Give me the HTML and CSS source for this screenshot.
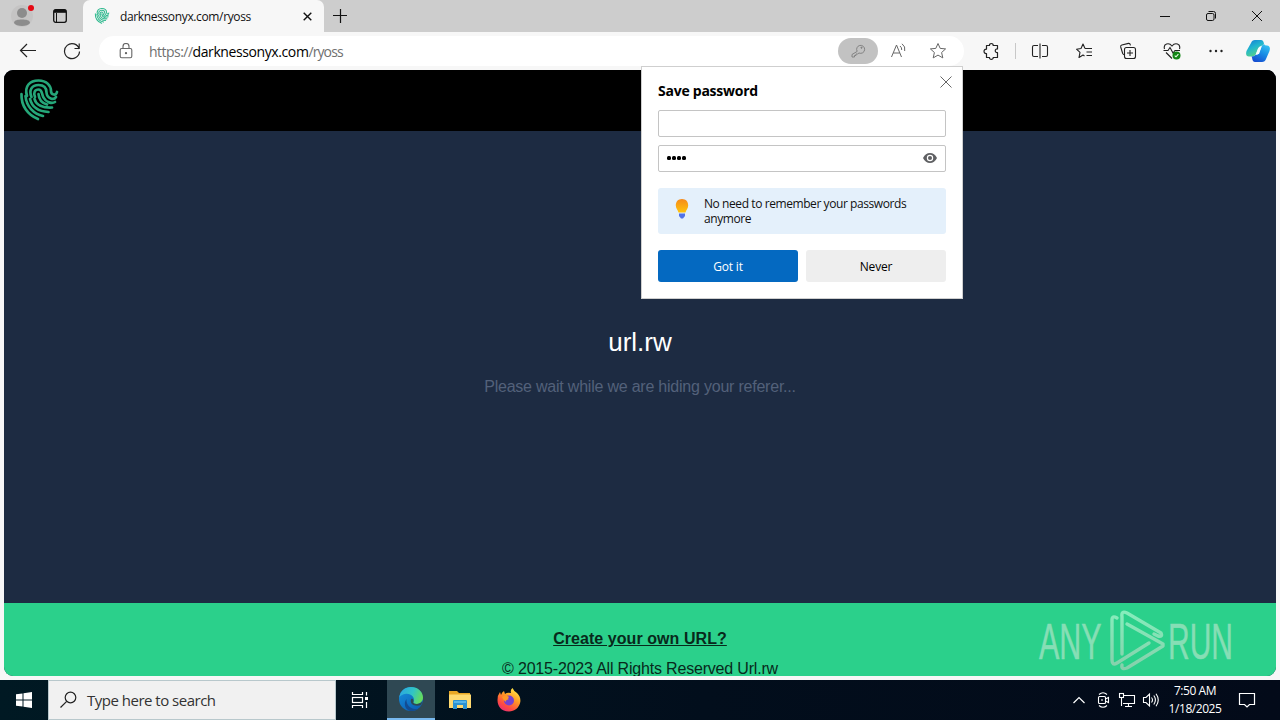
FILE: index.html
```html
<!DOCTYPE html>
<html lang="en">
<head>
<meta charset="utf-8">
<title>darknessonyx.com/ryoss</title>
<link rel="stylesheet" href="styles.css">
</head>
<body>
<svg class="defs" width="0" height="0">
  <defs>
    <linearGradient id="bulb" x1="0" y1="0" x2="0" y2="1"><stop offset="0" stop-color="#f58a1c"/><stop offset="1" stop-color="#ffc40c"/></linearGradient>
    <linearGradient id="cpA" x1="0" y1="0" x2="0.5" y2="1"><stop offset="0" stop-color="#1477d4"/><stop offset="0.5" stop-color="#20b5cf"/><stop offset="1" stop-color="#58d486"/></linearGradient>
    <linearGradient id="cpB" x1="0.8" y1="0" x2="0.3" y2="1"><stop offset="0" stop-color="#36c5f2"/><stop offset="0.5" stop-color="#198de5"/><stop offset="1" stop-color="#164ed1"/></linearGradient>
    <linearGradient id="edgeG" x1="0" y1="0.2" x2="1" y2="0.5"><stop offset="0" stop-color="#2aa5e2"/><stop offset="0.55" stop-color="#31c4c6"/><stop offset="1" stop-color="#66dc5a"/></linearGradient>
    <linearGradient id="edgeB" x1="0" y1="0" x2="0.7" y2="1"><stop offset="0" stop-color="#1792df"/><stop offset="1" stop-color="#0b5fb4"/></linearGradient>
    <linearGradient id="fox" x1="0.8" y1="0" x2="0.2" y2="1"><stop offset="0" stop-color="#fff14b"/><stop offset="0.4" stop-color="#ff9a25"/><stop offset="0.75" stop-color="#ff4a42"/><stop offset="1" stop-color="#e62b7b"/></linearGradient>
    <linearGradient id="mark" gradientUnits="userSpaceOnUse" x1="0" y1="0" x2="0" y2="62"><stop offset="0" stop-color="#86efbd"/><stop offset="1" stop-color="#86cfab"/></linearGradient>
    <symbol id="finger" viewBox="0 0 40 42">
      <g fill="none" stroke-width="2.700" stroke-linecap="round">
        <path d="M2.500 15C2 27 9 36 19 40"/>
        <path d="M8 17C5 7 11 1.500 19.500 1.500C28 1.500 32 7 32 12C32 16 37 17 38 13"/>
        <path d="M6.500 17C7.500 28 15 35 24 37"/>
        <path d="M12.500 18C9.500 11 13 6 19.500 6C26 6 27.500 10 27.500 13.500C28 20 35 21.500 37 18"/>
        <path d="M11 20C13 28 20 32.500 29.500 33"/>
        <path d="M16 18C14 13.500 16 10.500 19.500 10.500C23.500 10.500 22.500 15 24.500 18.500C27 23.500 33 25 36 23"/>
        <path d="M15.500 20C17 26 24 29 33 28.500"/>
        <path d="M19.500 15C20 21 24 24.500 28 25.500"/>
      </g>
    </symbol>
  </defs>
</svg>
<div class="screen">
  <header class="tabbar">
    <div class="profile">
      <svg width="44" height="32" viewBox="0 0 44 32"><circle cx="22" cy="16" r="11" fill="#c5c4c4"/><circle cx="22" cy="13" r="5" fill="#8c8c8c"/><path d="M14 23C14 20 18 19.500 22 19.500S30 20 30 23C28 27 16 27 14 23Z" fill="#8c8c8c"/><circle cx="31" cy="8" r="3" fill="#e50914"/></svg>
    </div>
    <div class="spaces"><svg width="14" height="14" viewBox="0 0 14 14" fill="none" stroke="#111"><rect x=".7" y=".7" width="12.600" height="12.600" rx="2" stroke-width="1.300"/><path d="M1 2.300H13" stroke-width="3"/><path d="M3.500 4V13"/></svg></div>
    <div class="tab">
      <svg class="favicon" width="16" height="16"><use href="#finger"/></svg>
      <span class="tab-title">darknessonyx.com/ryoss</span>
      <svg class="tab-close" width="9" height="9" viewBox="0 0 9 9" stroke="#111" stroke-width="1.400"><path d="M.7 .7 8.300 8.300M8.300 .7 .7 8.300"/></svg>
    </div>
    <div class="newtab"><svg width="14" height="14" viewBox="0 0 14 14" stroke="#111" stroke-width="1.200"><path d="M7.500 0V14M0 6.500H14"/></svg></div>
    <div class="window-controls">
      <span><svg width="12" height="12" viewBox="0 0 12 12" stroke="#111"><path d="M1 6.500H11"/></svg></span>
      <span><svg width="12" height="12" viewBox="0 0 12 12" fill="none" stroke="#111"><rect x="1.500" y="3.500" width="7.500" height="7" rx="1.500"/><path d="M3.500 1.500H8.500Q10.500 1.500 10.500 3.500V8.500"/></svg></span>
      <span><svg width="12" height="12" viewBox="0 0 12 12" stroke="#111"><path d="M1 1 11 11M11 1 1 11"/></svg></span>
    </div>
  </header>

  <nav class="toolbar">
    <span class="nav"><svg width="18" height="16" viewBox="0 0 18 16" fill="none" stroke="#222" stroke-width="1.200"><path d="M17 7.500H1.500M8 1 1.500 7.500 8 14"/></svg></span>
    <span class="nav"><svg width="18" height="18" viewBox="0 0 18 18" fill="none" stroke="#222" stroke-width="1.200"><path d="M16.200 7A7.500 7.500 0 1 0 16.500 9.500M16.200 1.500V6.500H11.500"/></svg></span>
    <div class="address">
      <svg class="lock" width="14" height="16" viewBox="0 0 14 16" fill="none" stroke="#666" stroke-width="1.100"><rect x="1.200" y="5.500" width="11.600" height="9.300" rx="1.500"/><path d="M4 5.500V3.500A3 3 0 0 1 10 3.500V5.500"/><circle cx="7" cy="10.200" r=".6" fill="#666"/></svg>
      <span class="url">https://<b>darknessonyx.com</b><i>/ryoss</i></span>
      <span class="key"><svg width="16" height="16" viewBox="0 0 16 16" fill="none" stroke="#828282"><path d="M7.200 8.400A4 4 0 1 1 9 10L7.500 11H6V12.500H4.500V14H2V11.500Z" stroke-linejoin="round"/><circle cx="11.500" cy="4.700" r=".6" fill="#828282"/></svg></span>
      <span class="tool"><svg width="18" height="18" viewBox="0 0 18 18" fill="none" stroke="#666"><path d="M2.500 15 7.500 3 12.500 15M4.200 11H10.800M11 4Q13 5.500 12.700 8M13 1.800Q16.800 4.500 15.700 9"/></svg></span>
      <span class="tool"><svg width="18" height="18" viewBox="0 0 18 18" fill="none" stroke="#666" stroke-linejoin="round"><path d="M9 1.500 11.200 6.400 16.600 6.900 12.600 10.500 13.800 15.900 9 13.100 4.200 15.900 5.400 10.500 1.400 6.900 6.800 6.400Z"/></svg></span>
    </div>
    <span class="puzzle"><svg width="18" height="18" viewBox="0 0 18 18" fill="none" stroke="#222" stroke-width="1.200" stroke-linejoin="round"><path d="M4.500 3.500H7.500C7.100 .8 11.500 .8 11.200 3.500H15.500V7C12.500 6.500 12.500 11 15.500 10.700V15.500H11.200C11.500 18 7.100 18 7.500 15.500H4.500V11.500C1.200 12 1.200 6.700 4.500 7.200Z"/></svg></span>
    <span class="divider"></span>
    <span class="action"><svg width="18" height="18" viewBox="0 0 18 18" fill="none" stroke="#222" stroke-width="1.100"><path d="M7 3.500H3Q1.500 3.500 1.500 5V13Q1.500 14.500 3 14.500H7M11 3.500H15Q16.500 3.500 16.500 5V13Q16.500 14.500 15 14.500H11M9 1.500V16.500"/></svg></span>
    <span class="action"><svg width="18" height="18" viewBox="0 0 18 18" fill="none" stroke="#222" stroke-width="1.100" stroke-linejoin="round"><path d="M10 6.500H17M11.500 10H17M11.500 13.500H17M10 6.500 8 2 6 6.500 1.500 7.200 5 10.300 4 15.500 8 13 9.500 14"/></svg></span>
    <span class="action"><svg width="18" height="18" viewBox="0 0 18 18" fill="none" stroke="#222" stroke-width="1.100"><rect x="5.500" y="5.500" width="11" height="11" rx="2"/><path d="M11 8V14M8 11H14M3.700 11.500 1.700 5Q1.300 3.500 2.800 3L9.500 1.400Q11 1.200 11.500 3.300M3.700 11.500Q4.200 12.500 5.500 12.800"/></svg></span>
    <span class="action"><svg width="18" height="18" viewBox="0 0 18 18" fill="none" stroke="#222" stroke-width="1.100"><path d="M1.500 7C0 1.500 6 .2 9 4C12 .2 18 1.500 16.500 7M3 10.500 9 16.500M.5 8.500H5L7 5.500 10 11 12 8.500H17"/><circle cx="13.500" cy="13.500" r="4" fill="#128515" stroke="none"/><path d="M11.700 13.700 13 14.800 15.400 12.200" stroke="#eaffea"/></svg></span>
    <span class="action"><svg width="16" height="4" viewBox="0 0 16 4" fill="#222"><circle cx="2.500" cy="2" r="1.200"/><circle cx="8" cy="2" r="1.200"/><circle cx="13.500" cy="2" r="1.200"/></svg></span>
    <span class="copilot"><svg width="24" height="24" viewBox="0 0 24 24"><path d="M5 4Q6 1 9 1H15Q17.500 1 18 5L16 6.500Q13 7 12 10L10 15Q9 17.500 5 17.500H3Q-1 17.500 .5 12Z" fill="url(#cpA)"/><path d="M18 5Q18.500 6.500 21 6.500Q25 7 23.500 12L20 20Q19 23 16 23H9Q6.500 23 6 18.500L5.500 17.500Q9 17.500 10 15H13L16 6.500Z" fill="url(#cpB)"/><path d="M12 9.500Q12.500 7.500 15.500 7.500L13 14Q12.500 16 9.500 16Z" fill="#f8fcff"/></svg></span>
  </nav>

  <section class="viewport">
    <div class="site-head"><svg class="logo" width="40" height="42"><use href="#finger"/></svg></div>
    <main class="site-main">
      <h1>url.rw</h1>
      <p>Please wait while we are hiding your referer...</p>
    </main>
    <footer class="site-foot">
      <a>Create your own URL?</a>
      <p>© 2015-2023 All Rights Reserved Url.rw</p>
    </footer>
  </section>

  <div class="taskbar">
    <span class="start"><svg width="16" height="16" viewBox="0 0 16 16" fill="#fff"><path d="M0 2.300 6.500 1.400V7.500H0ZM7.500 1.200 16 0V7.500H7.500ZM0 8.500H6.500V14.600L0 13.700ZM7.500 8.500H16V16L7.500 14.800Z"/></svg></span>
    <div class="search"><svg width="18" height="18" viewBox="0 0 18 18" fill="none" stroke="#222" stroke-width="1.200"><circle cx="10.500" cy="6.500" r="5.300"/><path d="M6.700 10.400 .5 16.500"/></svg><span class="search-text">Type here to search</span></div>
    <span class="task view"><svg width="18" height="18" viewBox="0 0 18 18" fill="none" stroke="#fff" stroke-width="1.200"><path d="M1.500 1V3.500H11.500V1M1.500 17V14.500H11.500V17M15.500 1V4.500M15.500 11V17"/><rect x="1.500" y="6.500" width="10" height="5"/><path d="M14 7.500H17" stroke-width="3"/></svg></span>
    <span class="task active"><svg width="24" height="24" viewBox="0 0 24 24"><circle cx="12" cy="12" r="12" fill="url(#edgeB)"/><path d="M.2 10.500C1.200 4 6 0 12 0C19 0 24 5 24 10.500C24 14.500 21 17 17.500 17C15 17 13.700 16 14.500 14.500C16.500 10.500 12 6.200 7 6.700C3.500 7 1 9 .2 10.500Z" fill="url(#edgeG)"/><path d="M14.500 14.500C13.700 16 15 17 17.500 17C20 17 22 16 23 14.500Q23 17.500 21.500 18.300C18 19.500 12.800 18.500 12 15.500C11.300 13.500 12 12 13 11.500Q15 12.500 14.500 14.500Z" fill="#2f4853"/><path d="M7.500 12C7 17.500 11 22.500 19 22Q15.500 24.500 11 24C5.500 22 4.500 16 7.500 12Z" fill="#134c92"/></svg></span>
    <span class="task"><svg width="22" height="20" viewBox="0 0 22 20"><path d="M0 1H8L10 3H21V18H0Z" fill="#e9a825"/><path d="M0 4.500H22V18H0Z" fill="#ffda70"/><path d="M4 19V11Q4 10 5 10H17Q18 10 18 11V19H14V15H8V19Z" fill="#2c93d1"/><path d="M5 11H17V13H5Z" fill="#55b5e9"/></svg></span>
    <span class="task"><svg width="24" height="24" viewBox="0 0 24 24"><path d="M14 5Q13 2 15.500 0Q17 3.500 20 5Q24 9 23.300 14C22 20 17.500 23.500 12 23.500C4 23.500 .5 18 .5 12Q.5 7 3 4L4 7Q5 4 7 3L8 6Q10 4 14 5Z" fill="url(#fox)"/><circle cx="12" cy="12.500" r="5" fill="#7542d0"/><path d="M5 9Q9 6 12 9Q10.500 10 11.500 11.500Q8 12 9 14Q6 12 5 9Z" fill="#ff9825"/></svg></span>
    <div class="tray">
      <span><svg width="14" height="10" viewBox="0 0 14 10" fill="none" stroke="#fff" stroke-width="1.200"><path d="M1.500 8 7 2.500 12.500 8"/></svg></span>
      <span><svg width="14" height="18" viewBox="0 0 14 18" fill="none" stroke="#fff" stroke-width="1.100"><rect x="2.500" y="5.500" width="7" height="7" rx="1"/><path d="M9.500 8 12.500 6.500V11.500L9.500 10M3 3.500Q7 0 11 3.500M3 14.500Q7 18 11 14.500M6 8V10"/></svg></span>
      <span><svg width="18" height="16" viewBox="0 0 18 16" fill="none" stroke="#fff" stroke-width="1.100"><path d="M5 3.500H16.500V11.500H5M10.500 11.500V14.500M7 14.500H14M3.500 6V14"/><rect x="1.500" y="1.500" width="4" height="4"/></svg></span>
      <span><svg width="18" height="16" viewBox="0 0 18 16" fill="none" stroke="#fff" stroke-width="1.100"><path d="M1.500 5.500H4L7.500 2V14L4 10.500H1.500ZM9.500 5.500Q11.500 8 9.500 10.500M11.800 3.500Q15 8 11.800 12.500M14 1.800Q18.500 8 14 14.200"/></svg></span>
      <div class="clock"><span>7:50 AM</span><span>1/18/2025</span></div>
      <span class="notice"><svg width="18" height="18" viewBox="0 0 18 18" fill="none" stroke="#fff" stroke-width="1.200"><path d="M1.500 2.500H16.500V13.500H11.500L9 16 6.500 13.500H1.500Z"/></svg></span>
    </div>
  </div>

  <aside class="popup">
    <svg class="popup-close" width="12" height="12" viewBox="0 0 12 12" stroke="#666"><path d="M.5 .5 11.500 11.500M11.500 .5 .5 11.500"/></svg>
    <h2>Save password</h2>
    <div class="field"></div>
    <div class="field secret"><span class="dots"><i></i><i></i><i></i><i></i></span><svg width="14" height="10" viewBox="0 0 14 10"><path d="M0 5Q2.500 0 7 0T14 5Q11.500 10 7 10T0 5Z" fill="#5f6063"/><circle cx="7" cy="5" r="3.200" fill="#fff"/><circle cx="7" cy="5" r="2" fill="#5f6063"/></svg></div>
    <div class="tip"><svg width="14" height="20" viewBox="0 0 14 20"><path d="M7 0C3 0 .8 2.800 .8 6.500C.8 9.500 3 11 3.500 13.500H10.500C11 11 13.200 9.500 13.200 6.500C13.200 2.800 11 0 7 0Z" fill="url(#bulb)"/><path d="M4 14.500H10V17L8 19.500H6L4 17Z" fill="#5273e8"/></svg><span class="tip-text">No need to remember your passwords<br>anymore</span></div>
    <div class="buttons"><span class="primary">Got it</span><span class="secondary">Never</span></div>
  </aside>

  <svg class="watermark" width="230" height="66" viewBox="0 0 230 66">
    <g class="mark-text"><text transform="translate(1 51) scale(.61 1)">ANY</text><text transform="translate(130 51) scale(.6 1)">RUN</text></g>
    <g fill="none" stroke="url(#mark)" stroke-width="3.400" stroke-linejoin="round" stroke-linecap="round"><path d="M79 10Q74 7 74 12V52Q74 58 79 55L111 35M84 46V9Q83 2 89 5L123 25Q125 29 120 28L116 26M89 16L125 36V38L89 60Q83 62 84 57"/></g>
  </svg>
</div>
</body>
</html>
```
FILE: styles.css
```css
* { box-sizing: border-box; }
body { margin: 0; font-family: "Open Sans", "Noto Sans", sans-serif; color: #111; }
svg { display: block; flex: none; }
h1, h2, p { margin: 0; font-weight: 400; }
.defs { position: absolute; }
.screen { position: relative; display: flex; flex-direction: column; width: 1280px; height: 720px; overflow: hidden; background: #f7f7f7; }
.tabbar { display: flex; height: 32px; background: #cdcdcd; }
.profile { width: 44px; }
.spaces { display: flex; align-items: center; justify-content: center; width: 32px; }
.tab { display: flex; align-items: center; width: 241px; margin-left: 7px; padding: 0 12px 0 11px; background: #f7f7f7; border-radius: 7px 7px 0 0; }
.favicon { stroke: #2fb98e; }
.tab-title { margin-left: 10px; font-size: 12px; letter-spacing: -.36px; white-space: nowrap; }
.tab-close { margin-left: auto; }
.newtab { display: flex; align-items: center; padding-left: 9px; }
.window-controls { display: flex; margin-left: auto; }
.window-controls span { display: flex; align-items: center; justify-content: center; width: 46px; }
.toolbar { display: flex; align-items: center; height: 38px; background: #f7f7f7; }
.nav, .action, .tool, .puzzle, .copilot { display: flex; align-items: center; justify-content: center; width: 44px; height: 32px; flex: none; }
.nav:first-child { margin-left: 6px; }
.address { display: flex; align-items: center; width: 865px; height: 30px; margin-left: 5px; padding-left: 20px; background: #fff; border-radius: 15px; }
.url { width: 199px; margin-left: 16px; color: #707070; font-size: 14px; letter-spacing: -.53px; white-space: nowrap; }
.url b { color: #000; font-weight: 400; letter-spacing: -.4px; }
.url i { font-style: normal; letter-spacing: -.9px; }
.key { display: flex; align-items: center; justify-content: center; width: 40px; height: 26px; margin-left: auto; background: #c2c2c2; border-radius: 13px; }
.tool { width: 40px; }
.tool:last-child { margin-right: 6px; }
.puzzle { margin-left: 5px; }
.divider { width: 1px; height: 16px; margin: 0 2px; background: #c8c8c8; }
.copilot { width: 40px; }
.viewport { display: flex; flex-direction: column; height: 606px; margin: 0 4px; overflow: hidden; border-radius: 9px; background: #1d2b42; }
.site-head { height: 61px; padding: 9px 0 0 15px; background: #000; }
.logo { stroke: #25a779; }
.site-main { height: 472px; padding-top: 193px; text-align: center; font-family: "Liberation Sans", Arial, sans-serif; }
.site-main h1 { color: #fff; font-size: 26px; line-height: 36px; }
.site-main p { margin-top: 17px; color: #53617a; font-size: 16px; line-height: 20px; letter-spacing: -.22px; }
.site-foot { height: 73px; padding-top: 26px; background: #2bd08b; color: #08291b; text-align: center; font-family: "Liberation Sans", Arial, sans-serif; font-size: 16px; line-height: 20px; }
.site-foot a { font-weight: 700; letter-spacing: .06px; text-decoration: underline; }
.site-foot p { margin-top: 10px; letter-spacing: -.19px; }
.taskbar { display: flex; height: 40px; margin-top: 4px; background: linear-gradient(90deg, #001923, #020e1c 55%, #030a19); color: #fff; }
.start, .task { display: flex; align-items: center; justify-content: center; width: 49px; flex: none; }
.start { width: 48px; }
.search { display: flex; align-items: center; width: 288px; padding-left: 11px; background: #f1f1f1; border: 1px solid #b8c8cc; }
.search-text { margin-left: 9px; color: #333; font-size: 15px; letter-spacing: -.5px; white-space: nowrap; }
.view { width: 48px; margin-right: 3px; }
.active { width: 48px; background: #2f4853; border-bottom: 2px solid #78b9ef; }
.tray { display: flex; align-items: center; margin-left: auto; padding-right: 13px; }
.tray > span { display: flex; align-items: center; justify-content: center; width: 24px; }
.clock { display: flex; flex-direction: column; align-items: center; width: 64px; font-size: 12px; line-height: 18px; letter-spacing: -.45px; white-space: nowrap; }
.tray .notice { width: 40px; }
.popup { position: absolute; left: 641px; top: 66px; width: 322px; height: 233px; padding: 14px 16px 0; background: #fff; border: 1px solid #cfcfcf; }
.popup h2 { font-size: 14px; font-weight: 700; line-height: 20px; letter-spacing: -.25px; white-space: nowrap; color: #000; }
.popup-close { position: absolute; right: 10px; top: 9px; }
.field { height: 27px; margin-top: 8px; border: 1px solid #c4c4c4; border-radius: 2px; }
.popup h2 + .field { margin-top: 9px; }
.secret { display: flex; align-items: center; justify-content: space-between; padding: 0 8px 2px; }
.dots { display: flex; gap: 1px; }
.dots i { width: 4px; height: 4px; border-radius: 1.5px; background: #000; }
.tip { display: flex; align-items: center; height: 46px; margin-top: 16px; padding-left: 17px; background: #e4f0fb; border-radius: 3px; }
.tip svg { margin-bottom: 4px; }
.tip-text { margin-left: 15px; color: #111; font-size: 12px; line-height: 15px; letter-spacing: -.42px; white-space: nowrap; }
.buttons { display: flex; gap: 8px; margin-top: 16px; font-size: 12px; letter-spacing: -.2px; }
.buttons span { display: flex; align-items: center; justify-content: center; width: 140px; height: 32px; border-radius: 3px; }
.primary { background: #0469c1; color: #fff; }
.secondary { background: #eee; color: #000; }
.watermark { position: absolute; left: 1038px; top: 608px; }
.mark-text { font-family: "Liberation Sans", sans-serif; font-size: 50px; fill: #86deb5; stroke: #86deb5; stroke-width: .5px; }
```
